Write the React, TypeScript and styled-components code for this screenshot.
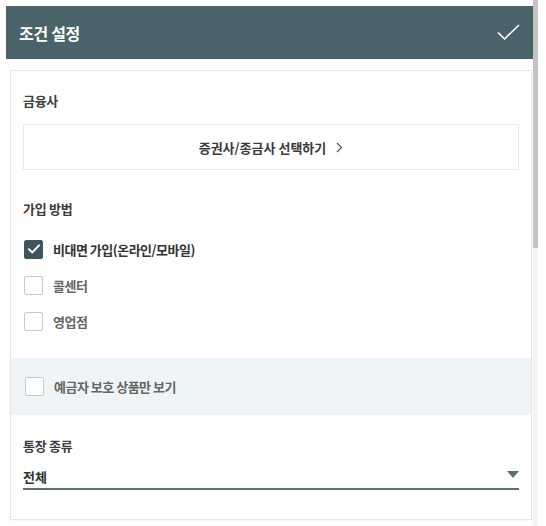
import React from "react";
import styled, { createGlobalStyle } from "styled-components";

const GlobalStyle = createGlobalStyle`
  html, body {
    margin: 0;
    padding: 0;
    background: #ffffff;
  }
  body {
    font-family: "Noto Sans CJK KR", "Noto Sans", "Liberation Sans", sans-serif;
    -webkit-font-smoothing: antialiased;
  }
  * { box-sizing: border-box; }
`;

const Page = styled.div`
  position: relative;
  width: 546px;
  height: 526px;
  padding: 6px 13px 0 6px;
  overflow: hidden;
`;

const ScrollTrack = styled.div`
  position: absolute;
  top: 0;
  right: 8px;
  width: 5px;
  height: 526px;
  background: #f4f4f4;
`;

const ScrollThumb = styled.div`
  width: 100%;
  height: 248px;
  background: #c3c3c3;
`;

const Header = styled.header`
  height: 53px;
  background: #4a6269;
  display: flex;
  align-items: center;
  justify-content: space-between;
  padding: 0 13px 0 13px;
`;

const Title = styled.h1`
  margin: 0;
  font-size: 16px;
  font-weight: 700;
  color: #ffffff;
  letter-spacing: -0.3px;
`;

const DoneButton = styled.button`
  border: 0;
  background: transparent;
  padding: 0;
  width: 24px;
  height: 20px;
  display: flex;
  align-items: center;
  justify-content: center;
  cursor: pointer;
`;

const Body = styled.div`
  padding: 11px 1px 0 4px;
`;

const Card = styled.div`
  background: #ffffff;
  border: 1px solid #e6e6e6;
  box-shadow: 0 1px 2px rgba(0, 0, 0, 0.04);
  padding-bottom: 29px;
`;

const Section = styled.section<{ $top: number }>`
  padding: ${(p) => p.$top}px 12px 0 12px;
`;

const Label = styled.div`
  font-size: 13px;
  line-height: 20px;
  font-weight: 700;
  color: #3c3c3c;
  letter-spacing: -0.3px;
`;

const PickButton = styled.button`
  margin-top: 13px;
  width: 100%;
  height: 46px;
  background: #ffffff;
  border: 1px solid #e9e9e9;
  display: flex;
  align-items: center;
  justify-content: center;
  gap: 10px;
  font-family: inherit;
  font-size: 13px;
  font-weight: 700;
  color: #3a3a3a;
  letter-spacing: 0;
  cursor: pointer;
`;

const CheckList = styled.div`
  margin-top: 12px;
  display: flex;
  flex-direction: column;
`;

const CheckRow = styled.label`
  height: 36px;
  display: flex;
  align-items: center;
  gap: 10px;
  padding-left: 1px;
  cursor: pointer;
`;

const Box = styled.span<{ $checked?: boolean }>`
  width: 19px;
  height: 19px;
  border-radius: 2px;
  flex: none;
  display: flex;
  align-items: center;
  justify-content: center;
  background: ${(p) => (p.$checked ? "#3d555c" : "#ffffff")};
  border: 1px solid ${(p) => (p.$checked ? "#3d555c" : "#c9c9c9")};
`;

const CheckText = styled.span<{ $checked?: boolean }>`
  font-size: 13px;
  font-weight: 700;
  color: ${(p) => (p.$checked ? "#333333" : "#666666")};
  letter-spacing: -0.5px;
`;

const Band = styled.div`
  margin-top: 19px;
  height: 57px;
  background: #eff4f6;
  display: flex;
  align-items: center;
  padding: 0 12px 0 13px;
`;

const Select = styled.div`
  margin-top: 10px;
  height: 24px;
  border-bottom: 2px solid #5c7075;
  display: flex;
  align-items: center;
  justify-content: space-between;
  padding: 0 0 2px 0;
`;

const SelectValue = styled.span`
  font-size: 13px;
  font-weight: 700;
  color: #2f2f2f;
`;

const Caret = styled.span`
  width: 0;
  height: 0;
  margin-top: -4px;
  border-left: 6px solid transparent;
  border-right: 6px solid transparent;
  border-top: 7px solid #567078;
`;

const CheckMark = ({ color = "#fff" }: { color?: string }) => (
  <svg width="12" height="10" viewBox="0 0 12 10" fill="none">
    <path d="M1 5.2 L4.4 8.4 L11 1.4" stroke={color} strokeWidth="2" strokeLinecap="round" strokeLinejoin="round" />
  </svg>
);

const Chevron = () => (
  <svg width="7" height="11" viewBox="0 0 7 11" fill="none">
    <path d="M1 1 L5.5 5.5 L1 10" stroke="#555" strokeWidth="1.2" />
  </svg>
);

type Option = { label: string; checked?: boolean };

const methods: Option[] = [
  { label: "비대면 가입(온라인/모바일)", checked: true },
  { label: "콜센터" },
  { label: "영업점" },
];

export default function App() {
  return (
    <>
      <GlobalStyle />
      <Page>
        <Header>
          <Title>조건 설정</Title>
          <DoneButton aria-label="완료">
            <svg width="23" height="17" viewBox="0 0 23 17" fill="none">
              <path d="M1 8.5 L7.5 15 L22 1" stroke="#ffffff" strokeWidth="1.6" />
            </svg>
          </DoneButton>
        </Header>
        <Body>
          <Card>
            <Section $top={20}>
              <Label>금융사</Label>
              <PickButton>
                증권사/종금사 선택하기
                <Chevron />
              </PickButton>
            </Section>
            <Section $top={29}>
              <Label>가입 방법</Label>
              <CheckList>
                {methods.map((m) => (
                  <CheckRow key={m.label}>
                    <Box $checked={m.checked}>{m.checked && <CheckMark />}</Box>
                    <CheckText $checked={m.checked}>{m.label}</CheckText>
                  </CheckRow>
                ))}
              </CheckList>
            </Section>
            <Band>
              <CheckRow>
                <Box />
                <CheckText>예금자 보호 상품만 보기</CheckText>
              </CheckRow>
            </Band>
            <Section $top={21}>
              <Label>통장 종류</Label>
              <Select>
                <SelectValue>전체</SelectValue>
                <Caret />
              </Select>
            </Section>
          </Card>
        </Body>
        <ScrollTrack>
          <ScrollThumb />
        </ScrollTrack>
      </Page>
    </>
  );
}
